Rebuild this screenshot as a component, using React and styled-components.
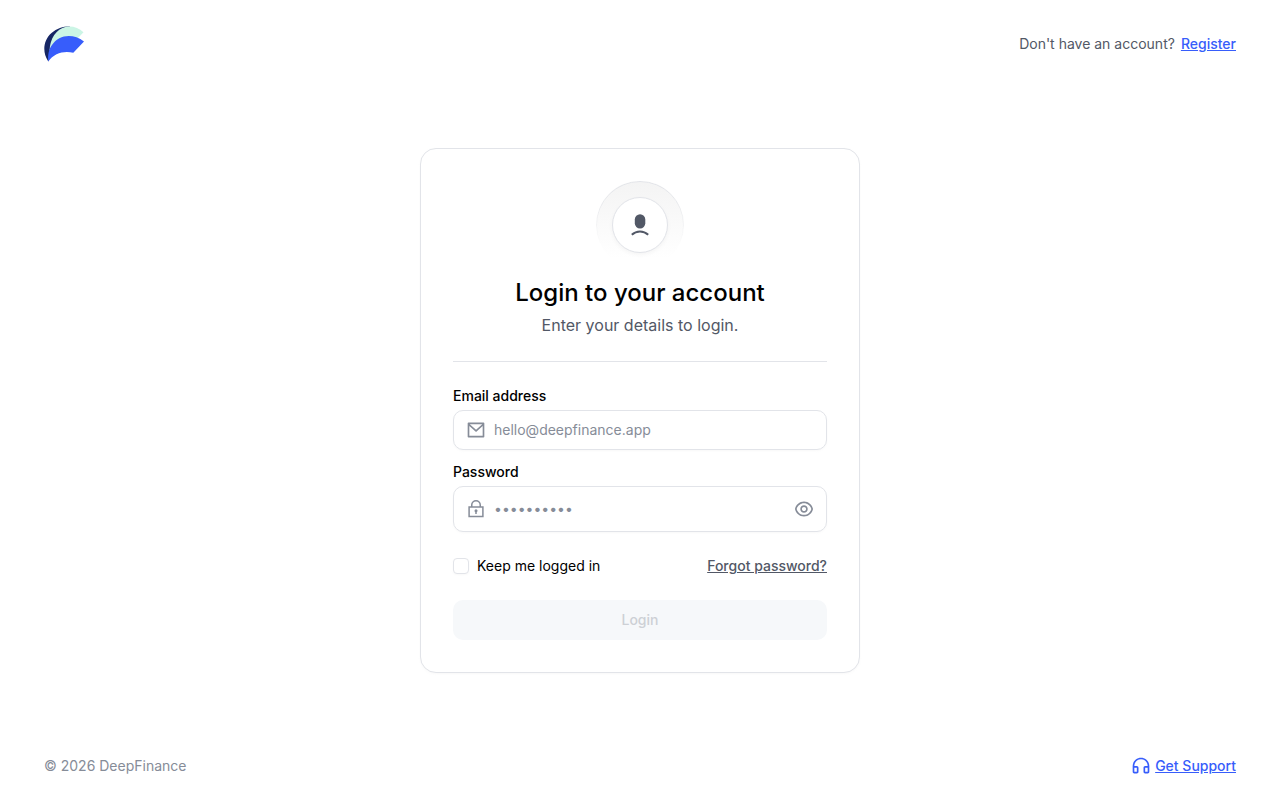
import { useState } from 'react';
import styled, { createGlobalStyle } from 'styled-components';
import { RiMailLine, RiHeadphoneLine, RiEyeLine } from 'react-icons/ri';

const colors = {
  text: '#000000',
  sub: '#525866',
  soft: '#868c98',
  disabled: '#cdd0d5',
  border: '#e2e4e9',
  weak: '#f6f8fa',
  primary: '#375dfb',
};

const GlobalStyle = createGlobalStyle`
  * {
    box-sizing: border-box;
  }

  body {
    margin: 0;
    background: #fff;
    color: ${colors.text};
    font-family: Inter, sans-serif;
    font-size: 14px;
    line-height: 20px;
  }

  button,
  input {
    font: inherit;
  }
`;

const Page = styled.div`
  display: flex;
  flex-direction: column;
  min-height: 100vh;
`;

const Header = styled.header`
  display: flex;
  align-items: center;
  justify-content: space-between;
  padding: 24px 44px;
`;

const Footer = styled.footer`
  display: flex;
  align-items: center;
  justify-content: space-between;
  padding: 24px 44px;
  color: ${colors.soft};
`;

const Main = styled.main`
  flex: 1;
  display: flex;
  align-items: center;
  justify-content: center;
`;

const HomeLink = styled.a`
  display: flex;
`;

const RegisterHint = styled.div`
  display: flex;
  gap: 6px;
  color: ${colors.sub};
`;

const TextLink = styled.a`
  display: inline-flex;
  align-items: center;
  gap: 4px;
  color: ${(props) => (props.$muted ? colors.sub : colors.primary)};
  font-weight: 500;
  text-decoration: underline;
`;

const Card = styled.form`
  width: 100%;
  max-width: 440px;
  padding: 32px;
  border: 1px solid ${colors.border};
  border-radius: 16px;
  background: #fff;
  box-shadow: 0 1px 2px rgba(228, 229, 231, 0.24);
`;

const Intro = styled.div`
  display: flex;
  flex-direction: column;
  align-items: center;
  padding-bottom: 24px;
  border-bottom: 1px solid ${colors.border};
  text-align: center;
`;

// outer ring fades out towards the bottom
const Halo = styled.div`
  position: relative;
  display: flex;
  align-items: center;
  justify-content: center;
  width: 88px;
  height: 88px;
  border-radius: 50%;
  background: linear-gradient(180deg, rgba(130, 130, 130, 0.09), rgba(130, 130, 130, 0) 88%);

  &::before {
    content: '';
    position: absolute;
    inset: 0;
    border: 1px solid ${colors.border};
    border-radius: 50%;
    mask-image: linear-gradient(#000, transparent 70%);
  }
`;

const Avatar = styled.div`
  display: flex;
  align-items: center;
  justify-content: center;
  width: 56px;
  height: 56px;
  border: 1px solid ${colors.border};
  border-radius: 50%;
  background: #fff;
  color: ${colors.sub};
  box-shadow: 0 2px 4px rgba(27, 28, 29, 0.04);
`;

const Title = styled.h1`
  margin: 8px 0 4px;
  font-size: 24px;
  font-weight: 500;
  line-height: 32px;
`;

const Subtitle = styled.p`
  margin: 0;
  color: ${colors.sub};
  font-size: 16px;
  line-height: 24px;
`;

const Fields = styled.div`
  display: flex;
  flex-direction: column;
  gap: 12px;
  padding: 24px 0;
`;

const Field = styled.div`
  display: flex;
  flex-direction: column;
  gap: 4px;
`;

const Label = styled.label`
  font-weight: 500;
`;

const InputBox = styled.div`
  display: flex;
  align-items: center;
  gap: 8px;
  height: ${(props) => (props.$tall ? '46px' : '40px')};
  padding: 0 12px;
  border: 1px solid ${colors.border};
  border-radius: 10px;
  color: ${colors.soft};
  box-shadow: 0 1px 2px rgba(228, 229, 231, 0.24);

  svg {
    flex-shrink: 0;
  }
`;

const Input = styled.input`
  flex: 1;
  min-width: 0;
  padding: 0;
  border: 0;
  outline: 0;
  background: transparent;
  color: ${colors.text};

  &::placeholder {
    color: ${colors.soft};
    opacity: 1;
  }
`;

const IconButton = styled.button`
  display: flex;
  padding: 0;
  border: 0;
  background: none;
  color: ${colors.soft};
  cursor: pointer;
`;

const Options = styled.div`
  display: flex;
  align-items: center;
  justify-content: space-between;
`;

const Keep = styled.label`
  display: flex;
  align-items: center;
  gap: 8px;
`;

const Checkbox = styled.input`
  appearance: none;
  width: 16px;
  height: 16px;
  margin: 0;
  border: 1px solid ${colors.border};
  border-radius: 4px;
  background: #fff;
  box-shadow: 0 1px 2px rgba(228, 229, 231, 0.24);

  &:checked {
    border-color: ${colors.primary};
    background: ${colors.primary};
  }
`;

const Submit = styled.button`
  width: 100%;
  height: 40px;
  margin-top: 24px;
  border: 0;
  border-radius: 10px;
  background: ${colors.primary};
  color: #fff;
  font-weight: 500;

  &:disabled {
    background: ${colors.weak};
    color: ${colors.disabled};
  }
`;

const Logo = () => (
  <svg width="40" height="40" viewBox="0 0 40 40" aria-hidden="true">
    <path fill="#162664" d="M4.3 37.5C-2.2 28-.5 16 7.5 9 13 4.200 19 2.400 26 2.500L10 24Z" />
    <path fill="#cbf5e5" d="M5.600 26C6 15 12 5 22 2.800c6.500-1 12.500.8 17.500 5.400L33 15 6 27Z" />
    <path fill="#375dfb" d="M4.300 37.500C3.500 31 5 25 8 21 15 10.500 29 9 40 17.500L29.300 28.700C20 26.500 10 29 4.300 37.500Z" />
  </svg>
);

const UserIcon = () => (
  <svg width="28" height="28" viewBox="0 0 28 28" aria-hidden="true">
    <rect x="8.800" y="3.300" width="10.500" height="14.200" rx="5.250" fill="currentColor" />
    <path d="M5.800 23.800C10.500 19.300 17.500 19.300 22.200 23.800" fill="none" stroke="currentColor" strokeWidth="2" />
  </svg>
);

const LockIcon = () => (
  <svg width="20" height="20" viewBox="0 0 20 20" fill="none" stroke="currentColor" strokeWidth="1.500" aria-hidden="true">
    <path d="M3.100 8h13.800v9.500H3.100zM5.750 8V6a4.250 4.250 0 0 1 8.500 0v2" />
    <circle cx="10" cy="11.700" r="1.500" fill="currentColor" stroke="none" />
    <path d="M10 11.700v3.200" />
  </svg>
);

export default function App() {
  const [email, setEmail] = useState('');
  const [password, setPassword] = useState('');
  const [visible, setVisible] = useState(false);

  return (
    <Page>
      <GlobalStyle />
      <Header>
        <HomeLink href="#" aria-label="DeepFinance">
          <Logo />
        </HomeLink>
        <RegisterHint>
          Don't have an account?
          <TextLink href="#register">Register</TextLink>
        </RegisterHint>
      </Header>

      <Main>
        <Card onSubmit={(e) => e.preventDefault()}>
          <Intro>
            <Halo>
              <Avatar>
                <UserIcon />
              </Avatar>
            </Halo>
            <Title>Login to your account</Title>
            <Subtitle>Enter your details to login.</Subtitle>
          </Intro>

          <Fields>
            <Field>
              <Label htmlFor="email">Email address</Label>
              <InputBox>
                <RiMailLine size={20} />
                <Input
                  id="email"
                  type="email"
                  placeholder="hello@deepfinance.app"
                  value={email}
                  onChange={(e) => setEmail(e.target.value)}
                />
              </InputBox>
            </Field>
            <Field>
              <Label htmlFor="password">Password</Label>
              <InputBox $tall>
                <LockIcon />
                <Input
                  id="password"
                  type={visible ? 'text' : 'password'}
                  placeholder="••••••••••"
                  value={password}
                  onChange={(e) => setPassword(e.target.value)}
                />
                <IconButton type="button" aria-label="Show password" onClick={() => setVisible(!visible)}>
                  <RiEyeLine size={20} />
                </IconButton>
              </InputBox>
            </Field>
          </Fields>

          <Options>
            <Keep>
              <Checkbox type="checkbox" />
              Keep me logged in
            </Keep>
            <TextLink href="#forgot" $muted>Forgot password?</TextLink>
          </Options>
          <Submit type="submit" disabled={!email || !password}>Login</Submit>
        </Card>
      </Main>

      <Footer>
        <span>© 2026 DeepFinance</span>
        <TextLink href="#support">
          <RiHeadphoneLine size={20} />
          Get Support
        </TextLink>
      </Footer>
    </Page>
  );
}
